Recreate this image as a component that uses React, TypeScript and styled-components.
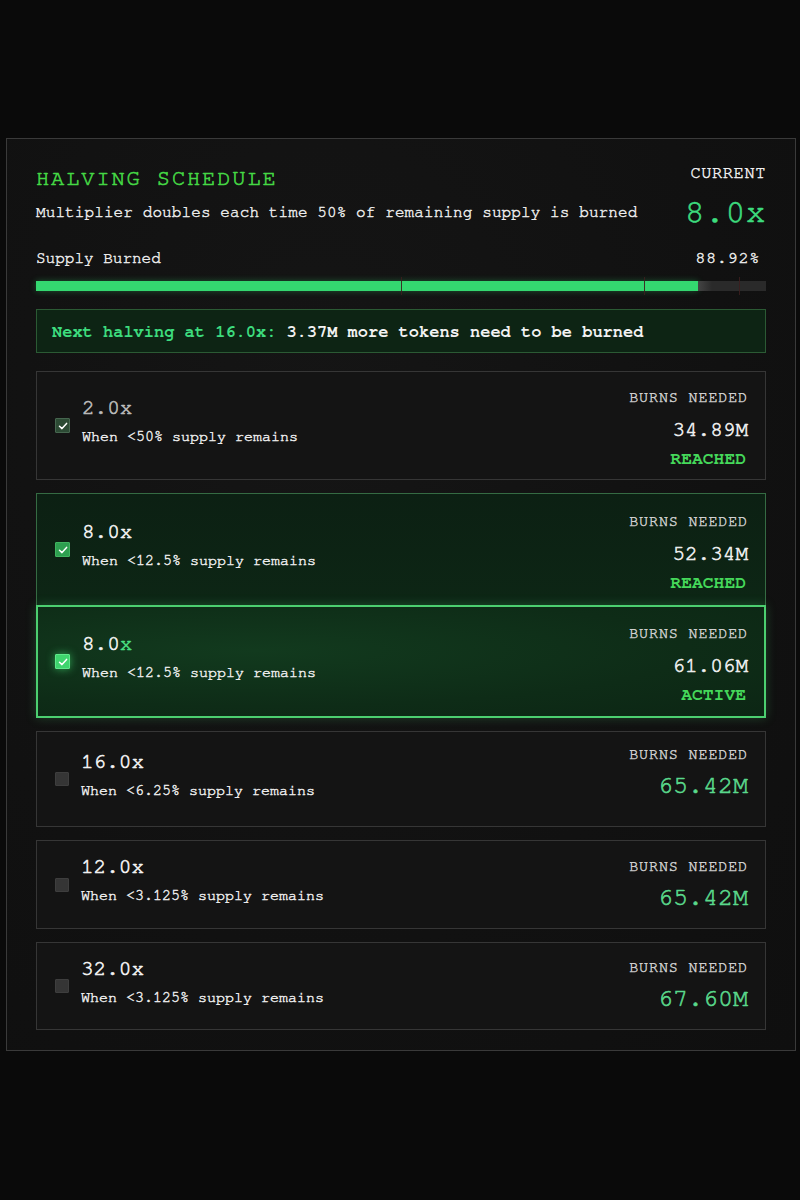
import React from "react";
import styled, { createGlobalStyle, css } from "styled-components";

const Global = createGlobalStyle`
  html, body { margin: 0; padding: 0; background: #0a0a0a; }
  body {
    font-family: "Nimbus Mono PS", "FreeMono", "Courier New", "Liberation Mono", monospace;
    color: #e8e8e8;
    -webkit-text-stroke: 0.45px currentColor;
  }
  * { box-sizing: border-box; }
`;

const Page = styled.div`
  width: 800px;
  min-height: 1200px;
  background: #0a0a0a;
  padding: 138px 5px 0 6px;
`;

const Panel = styled.section`
  width: 790px;
  height: 913px;
  background: radial-gradient(ellipse at 40% 30%, #151515 0%, #111111 60%, #0f0f0f 100%);
  border: 1px solid #3a3a3a;
  padding: 24px 29px 0 29px;
  display: flex;
  flex-direction: column;
`;

const Header = styled.div`
  display: flex;
  justify-content: space-between;
  align-items: flex-start;
`;

const HeaderLeft = styled.div`
  display: flex;
  flex-direction: column;
  gap: 12px;
  padding-top: 3px;
`;

const Title = styled.h1`
  margin: 0;
  font-size: 22px;
  line-height: 24px;
  font-weight: 400;
  letter-spacing: 1.9px;
  color: #45d845;
  -webkit-text-stroke: 0.6px currentColor;
`;

const Subtitle = styled.p`
  margin: 0;
  font-size: 16px;
  line-height: 20px;
  color: #ececec;
  letter-spacing: 0.1px;
`;

const HeaderRight = styled.div`
  display: flex;
  flex-direction: column;
  align-items: flex-end;
  gap: 12px;
`;

const SmallCaps = styled.div`
  font-size: 17px;
  line-height: 20px;
  letter-spacing: 0.6px;
  color: #f0f0f0;
`;

const BigValue = styled.div`
  font-size: 33px;
  line-height: 36px;
  letter-spacing: 0.5px;
  color: #3ddc7e;
  -webkit-text-stroke: 0.6px currentColor;
`;

const SupplyRow = styled.div`
  display: flex;
  justify-content: space-between;
  align-items: center;
  margin-top: 17px;
  font-size: 16px;
  line-height: 20px;
  color: #ececec;
`;

const Percent = styled.span`
  font-size: 17px;
  letter-spacing: 0.6px;
  padding-right: 6px;
`;

const Track = styled.div`
  position: relative;
  margin-top: 13px;
  height: 10px;
  background: #2a2a2a;
  width: 730px;
`;

const Fill = styled.div`
  height: 100%;
  background: #34d870;
  box-shadow: 0 0 6px rgba(52, 216, 112, 0.35);
  position: relative;
  &::after {
    content: "";
    position: absolute;
    right: -14px;
    top: 0;
    width: 14px;
    height: 100%;
    background: linear-gradient(90deg, #444 0%, #2a2a2a 100%);
  }
`;

const Tick = styled.span`
  position: absolute;
  top: -4px;
  width: 1px;
  height: 18px;
  background: rgba(60, 30, 30, 0.9);
`;

const Notice = styled.div`
  margin-top: 18px;
  height: 44px;
  width: 730px;
  border: 1px solid #2b5a34;
  background: #0d2414;
  display: flex;
  align-items: center;
  padding-left: 15px;
  font-size: 17px;
  font-weight: 700;
  color: #f2f2f2;
  -webkit-text-stroke: 0;
`;

const NoticeAccent = styled.span`
  color: #3ddc7e;
  margin-right: 10px;
`;

const List = styled.div`
  margin-top: 18px;
  width: 730px;
  display: flex;
  flex-direction: column;
  gap: 13px;
`;

const Joined = styled.div`
  display: flex;
  flex-direction: column;
`;

type Variant = "done" | "reached" | "active" | "pending";

const Row = styled.div<{ $variant: Variant; $h: number }>`
  height: ${(p) => p.$h}px;
  display: flex;
  align-items: center;
  justify-content: space-between;
  padding: 0 17px 0 18px;
  border: 1px solid #363636;
  background: #141414;
  ${(p) =>
    p.$variant === "reached" &&
    css`
      background: linear-gradient(180deg, #0c2013 0%, #0d2615 100%);
      border: 1px solid #356b43;
      border-bottom: none;
    `}
  ${(p) =>
    p.$variant === "active" &&
    css`
      background: radial-gradient(ellipse at 30% 40%, #123a1e 0%, #0e2c17 60%, #0c2614 100%);
      border: 2px solid #4ccf70;
      box-shadow: 0 0 10px rgba(76, 207, 112, 0.25);
      padding-left: 17px;
      padding-right: 16px;
    `}
`;

const LeftGroup = styled.div`
  display: flex;
  align-items: center;
  gap: 12px;
`;

const Box = styled.span<{ $state: "dim" | "on" | "glow" | "off" }>`
  width: 15px;
  height: 15px;
  display: inline-flex;
  align-items: center;
  justify-content: center;
  border-radius: 1px;
  ${(p) =>
    p.$state === "dim" &&
    css`
      background: #2c4a34;
      border: 1px solid #46664f;
    `}
  ${(p) =>
    p.$state === "on" &&
    css`
      background: #2e9f50;
      border: 1px solid #40b460;
    `}
  ${(p) =>
    p.$state === "glow" &&
    css`
      background: #3fd46e;
      border: 1px solid #5fe88a;
      box-shadow: 0 0 8px rgba(63, 212, 110, 0.7);
    `}
  ${(p) =>
    p.$state === "off" &&
    css`
      background: #353535;
      border: 1px solid #3e3e3e;
      width: 14px;
      height: 14px;
    `}
`;

const TextBlock = styled.div`
  display: flex;
  flex-direction: column;
  gap: 8px;
  padding-bottom: 9px;
`;

const Mult = styled.div<{ $dim?: boolean }>`
  font-size: 21px;
  line-height: 24px;
  color: ${(p) => (p.$dim ? "#bcbcbc" : "#f4f4f4")};
  -webkit-text-stroke: 0.6px currentColor;
`;

const MultX = styled.span`
  color: #4ade80;
`;

const Cond = styled.div`
  font-size: 15px;
  line-height: 18px;
  color: #ececec;
`;

const RightGroup = styled.div<{ $status: boolean; $lift: number }>`
  display: flex;
  flex-direction: column;
  align-items: flex-end;
  gap: ${(p) => (p.$status ? "11px" : "8px")};
  padding-top: ${(p) => (p.$status ? "6px" : "0")};
  padding-bottom: ${(p) => p.$lift}px;
`;

const Label = styled.div`
  font-size: 15px;
  line-height: 18px;
  letter-spacing: 0.9px;
  color: #cfcfcf;
`;

const Amount = styled.div<{ $green?: boolean }>`
  font-size: ${(p) => (p.$green ? "25px" : "21px")};
  line-height: ${(p) => (p.$green ? "28px" : "24px")};
  color: ${(p) => (p.$green ? "#5ad98c" : "#f0f0f0")};
  -webkit-text-stroke: 0.6px currentColor;
`;

const Status = styled.div`
  margin-top: -4px;
  font-size: 18px;
  line-height: 20px;
  font-weight: 700;
  color: #45d85a;
  padding-right: 2px;
  -webkit-text-stroke: 0;
`;

const Check = () => (
  <svg width="10" height="10" viewBox="0 0 10 10">
    <polyline points="1.5,5.2 4,7.6 8.6,2.4" fill="none" stroke="#ffffff" strokeWidth="1.5" strokeLinecap="round" strokeLinejoin="round" />
  </svg>
);

type Tier = {
  mult: string;
  cond: string;
  amount: string;
  status?: string;
  variant: Variant;
  box: "dim" | "on" | "glow" | "off";
  h: number;
  lift: number;
};

const tiers: Tier[] = [
  { mult: "2.0x", cond: "When <50% supply remains", amount: "34.89M", status: "REACHED", variant: "done", box: "dim", h: 109, lift: 0 },
  { mult: "8.0x", cond: "When <12.5% supply remains", amount: "52.34M", status: "REACHED", variant: "reached", box: "on", h: 112, lift: 0 },
  { mult: "8.0x", cond: "When <12.5% supply remains", amount: "61.06M", status: "ACTIVE", variant: "active", box: "glow", h: 113, lift: 0 },
  { mult: "16.0x", cond: "When <6.25% supply remains", amount: "65.42M", variant: "pending", box: "off", h: 96, lift: 12 },
  { mult: "12.0x", cond: "When <3.125% supply remains", amount: "65.42M", variant: "pending", box: "off", h: 89, lift: 0 },
  { mult: "32.0x", cond: "When <3.125% supply remains", amount: "67.60M", variant: "pending", box: "off", h: 88, lift: 0 },
];

const TierRow = ({ t }: { t: Tier }) => {
  const active = t.variant === "active";
  return (
    <Row $variant={t.variant} $h={t.h}>
      <LeftGroup>
        <Box $state={t.box}>{t.box !== "off" && <Check />}</Box>
        <TextBlock>
          <Mult $dim={t.variant === "done"}>
            {active ? (
              <>
                {t.mult.slice(0, -1)}
                <MultX>x</MultX>
              </>
            ) : (
              t.mult
            )}
          </Mult>
          <Cond>{t.cond}</Cond>
        </TextBlock>
      </LeftGroup>
      <RightGroup $status={!!t.status} $lift={t.lift}>
        <Label>BURNS NEEDED</Label>
        <Amount $green={!t.status}>{t.amount}</Amount>
        {t.status && <Status>{t.status}</Status>}
      </RightGroup>
    </Row>
  );
};

export default function App() {
  return (
    <Page>
      <Global />
      <Panel>
        <Header>
          <HeaderLeft>
            <Title>HALVING SCHEDULE</Title>
            <Subtitle>Multiplier doubles each time 50% of remaining supply is burned</Subtitle>
          </HeaderLeft>
          <HeaderRight>
            <SmallCaps>CURRENT</SmallCaps>
            <BigValue>8.0x</BigValue>
          </HeaderRight>
        </Header>
        <SupplyRow>
          <span>Supply Burned</span>
          <Percent>88.92%</Percent>
        </SupplyRow>
        <Track>
          <Fill style={{ width: `${((698 - 36) / 730) * 100}%` }} />
          <Tick style={{ left: "50%" }} />
          <Tick style={{ left: `${((644 - 36) / 730) * 100}%` }} />
          <Tick style={{ left: `${((739 - 36) / 730) * 100}%` }} />
        </Track>
        <Notice>
          <NoticeAccent>Next halving at 16.0x:</NoticeAccent>3.37M more tokens need to be burned
        </Notice>
        <List>
          <TierRow t={tiers[0]} />
          <Joined>
            <TierRow t={tiers[1]} />
            <TierRow t={tiers[2]} />
          </Joined>
          <TierRow t={tiers[3]} />
          <TierRow t={tiers[4]} />
          <TierRow t={tiers[5]} />
        </List>
      </Panel>
    </Page>
  );
}
